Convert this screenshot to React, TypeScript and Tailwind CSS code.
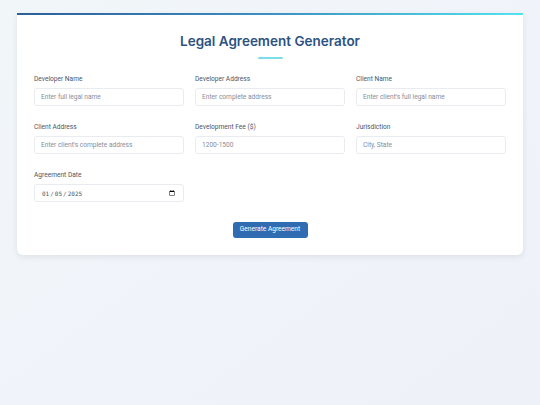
import { useState } from 'react';

const fields = [
  { label: 'Developer Name', placeholder: 'Enter full legal name' },
  { label: 'Developer Address', placeholder: 'Enter complete address' },
  { label: 'Client Name', placeholder: "Enter client's full legal name" },
  { label: 'Client Address', placeholder: "Enter client's complete address" },
  { label: 'Development Fee ($)', placeholder: '1200-1500' },
  { label: 'Jurisdiction', placeholder: 'City, State' },
];

const labelCls = "mb-[4px] text-[6.6px] leading-[10px] font-normal text-[#4a5568] font-['Roboto',sans-serif]";

export default function App() {
  const [date, setDate] = useState('2025-01-05');

  return (
    <div className="min-h-[405px] bg-gradient-to-br from-[#f1f6f9] via-[#f0f4fa] to-[#eef1f7] px-[17px] pt-[13px] font-['Inter',sans-serif]">
      <div className="overflow-hidden rounded-b-[6px] bg-white shadow-[0_2px_6px_rgba(0,0,0,0.08)]">
        <div className="h-[2px] bg-gradient-to-r from-[#2c5f97] via-[#3d8fc0] to-[#52e3ec]" />
        <div className="px-[17px] pt-[16px] pb-[17px]">
          <h1 className="text-center text-[13.5px] font-semibold leading-[21px] text-[#2c5282]">
            Legal Agreement Generator
          </h1>
          <div className="mx-auto mt-[5px] h-[2px] w-[25px] rounded-full bg-[#7ddde8]" />

          <div className="mt-[15px] grid grid-cols-3 gap-x-[11px] gap-y-[16px]">
            {fields.map((f) => (
              <div key={f.label} className="flex flex-col">
                <label className={labelCls}>{f.label}</label>
                <input
                  type="text"
                  placeholder={f.placeholder}
                  className="h-[18px] rounded-[3px] border border-[#e8ecf1] px-[6px] text-[6.6px] text-[#2d3748] placeholder:text-[#858d9a] font-['Roboto',sans-serif] outline-none"
                />
              </div>
            ))}
            <div className="flex flex-col">
              <label className={labelCls}>Agreement Date</label>
              <input
                type="date"
                value={date}
                onChange={(e) => setDate(e.target.value)}
                className="h-[18px] rounded-[3px] border border-[#e8ecf1] px-[6px] text-[6px] text-[#4a5568] font-['DejaVu_Sans_Mono',monospace] outline-none"
              />
            </div>
          </div>

          <div className="mt-[20px] flex justify-center">
            <button className="h-[16px] w-[75px] rounded-[3px] bg-[#2f6cb2] text-[6.6px] text-white font-['Roboto',sans-serif]">
              Generate Agreement
            </button>
          </div>
        </div>
      </div>
    </div>
  );
}
